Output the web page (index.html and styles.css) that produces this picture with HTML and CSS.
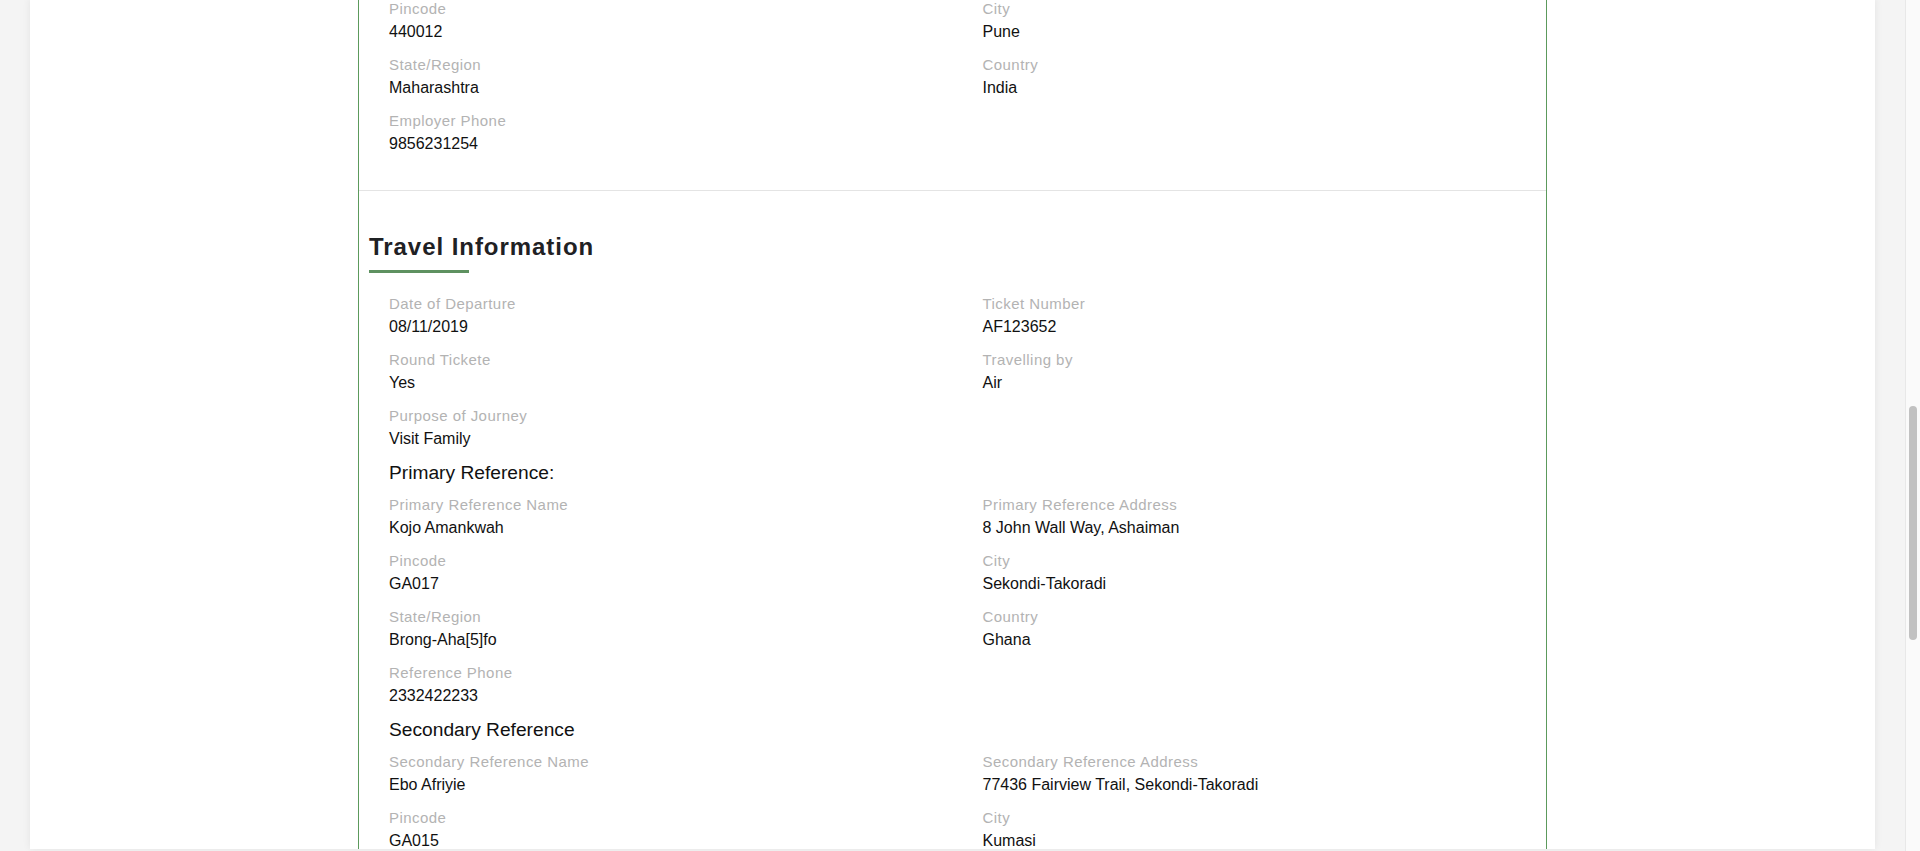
FILE: index.html
```html
<!DOCTYPE html>
<html lang="en">
<head>
<meta charset="utf-8">
<title>Application Details</title>
<link rel="stylesheet" href="styles.css">
</head>
<body>
<div class="viewport">
  <div class="panel">
    <div class="card">
      <section class="section section-first">
        <div class="fields">
          <div class="field"><div class="label">Pincode</div><div class="value">440012</div></div>
          <div class="field"><div class="label">City</div><div class="value">Pune</div></div>
          <div class="field"><div class="label">State/Region</div><div class="value">Maharashtra</div></div>
          <div class="field"><div class="label">Country</div><div class="value">India</div></div>
          <div class="field"><div class="label">Employer Phone</div><div class="value">9856231254</div></div>
        </div>
      </section>
      <section class="section section-travel">
        <h2 class="section-title">Travel Information</h2>
        <div class="fields">
          <div class="field"><div class="label">Date of Departure</div><div class="value">08/11/2019</div></div>
          <div class="field"><div class="label">Ticket Number</div><div class="value">AF123652</div></div>
          <div class="field"><div class="label">Round Tickete</div><div class="value">Yes</div></div>
          <div class="field"><div class="label">Travelling by</div><div class="value">Air</div></div>
          <div class="field"><div class="label">Purpose of Journey</div><div class="value">Visit Family</div></div>
        </div>
        <h3 class="sub-title">Primary Reference:</h3>
        <div class="fields">
          <div class="field"><div class="label">Primary Reference Name</div><div class="value">Kojo Amankwah</div></div>
          <div class="field"><div class="label">Primary Reference Address</div><div class="value">8 John Wall Way, Ashaiman</div></div>
          <div class="field"><div class="label">Pincode</div><div class="value">GA017</div></div>
          <div class="field"><div class="label">City</div><div class="value">Sekondi-Takoradi</div></div>
          <div class="field"><div class="label">State/Region</div><div class="value">Brong-Aha[5]fo</div></div>
          <div class="field"><div class="label">Country</div><div class="value">Ghana</div></div>
          <div class="field"><div class="label">Reference Phone</div><div class="value">2332422233</div></div>
        </div>
        <h3 class="sub-title">Secondary Reference</h3>
        <div class="fields">
          <div class="field"><div class="label">Secondary Reference Name</div><div class="value">Ebo Afriyie</div></div>
          <div class="field"><div class="label">Secondary Reference Address</div><div class="value">77436 Fairview Trail, Sekondi-Takoradi</div></div>
          <div class="field"><div class="label">Pincode</div><div class="value">GA015</div></div>
          <div class="field"><div class="label">City</div><div class="value">Kumasi</div></div>
        </div>
      </section>
    </div>
  </div>
</div>
<div class="scrollbar"><div class="scroll-thumb"></div></div>
</body>
</html>
```
FILE: styles.css
```css
html, body {
  margin: 0;
  padding: 0;
  height: 851px;
  overflow: hidden;
}
body {
  display: flex;
  background: #f4f4f4;
  font-family: "Liberation Sans", Arial, Helvetica, sans-serif;
  color: #111;
}
.viewport {
  flex: 1;
  padding: 0 30px;
  height: 851px;
  overflow: hidden;
}
.panel {
  background: #fff;
  height: 100%;
  box-shadow: 0 0 8px rgba(0, 0, 0, 0.07);
}
.card {
  width: 1187px;
  height: 100%;
  margin: 0 auto;
  border-left: 1px solid #5c9a5c;
  border-right: 1px solid #5c9a5c;
}
.section-first {
  margin-top: -2px;
  padding-bottom: 24px;
  border-bottom: 1px solid #e4e4e4;
}
.section-travel {
  padding-top: 41px;
}
.section-title {
  margin: 0 0 0 10px;
  font-size: 24px;
  line-height: 30px;
  font-weight: 700;
  letter-spacing: 0.95px;
  color: #1f2124;
  display: inline-block;
}
.section-title::after {
  content: "";
  display: block;
  width: 100px;
  height: 3px;
  margin-top: 8px;
  margin-bottom: 20px;
  background: #5e9160;
}
.fields {
  display: grid;
  grid-template-columns: 1fr 1fr;
}
.field {
  padding-left: 30px;
  margin-bottom: 11px;
}
.label {
  font-size: 15px;
  line-height: 22px;
  letter-spacing: 0.45px;
  color: #b3b3b3;
}
.value {
  font-size: 16px;
  line-height: 23px;
  color: #111;
}
.sub-title {
  margin: 0 0 9px 30px;
  font-size: 19.2px;
  line-height: 24px;
  font-weight: 400;
  color: #111;
}
.scrollbar {
  width: 14px;
  height: 851px;
  background: #fafafa;
  border-left: 1px solid #e8e8e8;
}
.scroll-thumb {
  width: 8px;
  height: 234px;
  margin: 406px 0 0 3px;
  border-radius: 4px;
  background: #c1c1c1;
}
```
